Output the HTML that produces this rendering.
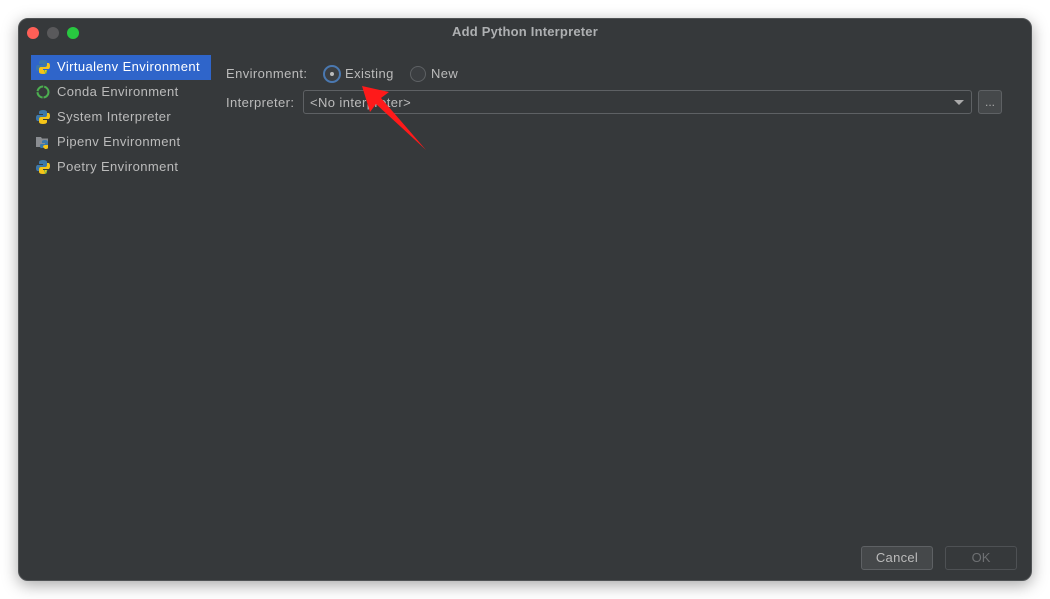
<!DOCTYPE html>
<html><head><style>
body{margin:0;width:1050px;height:599px;background:#fff;position:relative;overflow:hidden;font-family:"Liberation Sans",sans-serif;}
.win{position:absolute;left:18px;top:18px;width:1014px;height:563px;background:#36393b;border-radius:10px;box-shadow:0 4px 16px rgba(0,0,0,.35);border:1px solid #505355;box-sizing:border-box;}
.t{position:absolute;color:#bbbbbb;font-size:13px;letter-spacing:0.4px;white-space:nowrap;}
.dot{position:absolute;top:8px;width:12px;height:12px;border-radius:50%;}
.item{position:absolute;left:12px;width:180px;height:25px;}
.item .t{left:26px;top:4px;}
.sel{background:#2f65ca;}
.py{position:absolute;left:5px;top:5px;width:14px;height:14px;}
</style></head><body>
<div class="win">
 <div class="dot" style="left:8px;background:#fe5f57"></div>
 <div class="dot" style="left:28px;background:#59595b"></div>
 <div class="dot" style="left:48px;background:#28c840"></div>
 <div class="t" style="left:0;width:1012px;text-align:center;top:5px;font-weight:bold;color:#aeb0b2;letter-spacing:0.2px">Add Python Interpreter</div>

 <div class="item sel" style="top:36px"><svg class="py" viewBox="0 0 14 14"><path d="M7 0C3 0 3 2 3 2v2h4v1H1.5S0 5 0 8s1.5 3 1.5 3H3V9s0-2 2-2h4s2 0 2-2V2S11 0 7 0z" fill="#3c78aa"/><path d="M7 14c4 0 4-2 4-2v-2H7V9h5.5S14 9 14 6s-1.5-3-1.5-3H11v2s0 2-2 2H5s-2 0-2 2v3s0 2 4 2z" fill="#f5c518"/><text x="8" y="14" font-size="7" fill="#4caf50" font-family="Liberation Sans">v</text></svg><div class="t" style="color:#fff">Virtualenv Environment</div></div>
 <div class="item" style="top:61px"><svg class="py" viewBox="0 0 14 14"><circle cx="7" cy="7" r="5.5" fill="none" stroke="#4caf50" stroke-width="2" stroke-dasharray="8 1"/></svg><div class="t">Conda Environment</div></div>
 <div class="item" style="top:86px"><svg class="py" viewBox="0 0 14 14"><path d="M7 0C3 0 3 2 3 2v2h4v1H1.5S0 5 0 8s1.5 3 1.5 3H3V9s0-2 2-2h4s2 0 2-2V2S11 0 7 0z" fill="#3c78aa"/><path d="M7 14c4 0 4-2 4-2v-2H7V9h5.5S14 9 14 6s-1.5-3-1.5-3H11v2s0 2-2 2H5s-2 0-2 2v3s0 2 4 2z" fill="#f5c518"/></svg><div class="t">System Interpreter</div></div>
 <div class="item" style="top:111px"><svg class="py" viewBox="0 0 14 14"><path d="M0 2h5l1 1.5h6V12H0z" fill="#8a8d91"/><path d="M9 5c-3 0-3 1.5-3 1.5V8h3v1H5S4 9 4 11s1 2 1 2h4c3 0 3-1.5 3-1.5v-4S12 5 9 5z" fill="#3c78aa"/><path d="M9 14c3 0 3-1 3-1v-3H9c-2 0-2 2-2 2z" fill="#f5c518"/></svg><div class="t">Pipenv Environment</div></div>
 <div class="item" style="top:136px"><svg class="py" viewBox="0 0 14 14"><path d="M7 0C3 0 3 2 3 2v2h4v1H1.5S0 5 0 8s1.5 3 1.5 3H3V9s0-2 2-2h4s2 0 2-2V2S11 0 7 0z" fill="#3c78aa"/><path d="M7 14c4 0 4-2 4-2v-2H7V9h5.5S14 9 14 6s-1.5-3-1.5-3H11v2s0 2-2 2H5s-2 0-2 2v3s0 2 4 2z" fill="#f5c518"/><text x="8" y="14" font-size="7" fill="#4caf50" font-family="Liberation Sans">v</text></svg><div class="t">Poetry Environment</div></div>

 <div class="t" style="left:207px;top:47px">Environment:</div>
 <div style="position:absolute;left:304px;top:46px;width:14px;height:14px;border-radius:50%;border:2px solid #4a78b0;background:#3b3e41"><div style="position:absolute;left:5px;top:5px;width:4px;height:4px;border-radius:50%;background:#bbb"></div></div>
 <div class="t" style="left:326px;top:47px">Existing</div>
 <div style="position:absolute;left:391px;top:47px;width:14px;height:14px;border-radius:50%;border:1px solid #5e6164;background:#3b3e41"></div>
 <div class="t" style="left:412px;top:47px">New</div>

 <div class="t" style="left:207px;top:76px">Interpreter:</div>
 <div style="position:absolute;left:284px;top:71px;width:667px;height:22px;border:1px solid #5e6164;border-radius:3px;background:#36393b"></div>
 <div class="t" style="left:291px;top:76px">&lt;No interpreter&gt;</div>
 <div style="position:absolute;left:935px;top:81px;border-left:5px solid transparent;border-right:5px solid transparent;border-top:5px solid #aaa"></div>
 <div style="position:absolute;left:959px;top:71px;width:22px;height:22px;border:1px solid #5e6164;border-radius:3px;background:#45484a;color:#aaa;font-size:12px;text-align:center;line-height:22px">...</div>

 <div style="position:absolute;left:842px;top:527px;width:70px;height:22px;border:1px solid #5e6164;border-radius:3px;background:#45484a;color:#bbb;font-size:13px;letter-spacing:0.3px;text-align:center;line-height:22px">Cancel</div>
 <div style="position:absolute;left:926px;top:527px;width:70px;height:22px;border:1px solid #4e5154;border-radius:3px;color:#6e7073;font-size:13px;text-align:center;line-height:22px">OK</div>
</div>
<svg style="position:absolute;left:0;top:0" width="1050" height="599"><polygon points="362,86 389,92 381,98 426,150 376,104 370,112" fill="#ff1a1a"/></svg>
</body></html>
